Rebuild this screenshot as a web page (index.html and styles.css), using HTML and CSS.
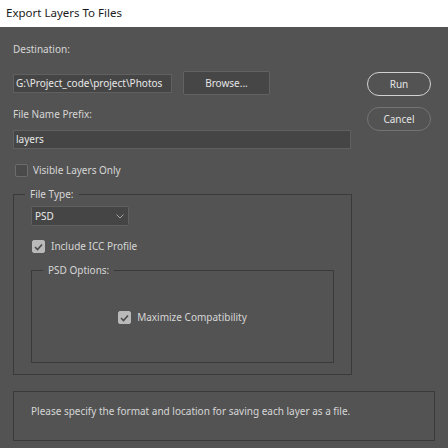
FILE: index.html
```html
<!DOCTYPE html>
<html>
<head>
<meta charset="utf-8">
<title>Export Layers To Files</title>
<link rel="stylesheet" href="styles.css">
</head>
<body>
<div class="titlebar">Export Layers To Files</div>
<div class="dialog">
  <div class="top">
    <div class="main">
      <div class="label">Destination:</div>
      <div class="dest-row">
        <div class="input path">G:\Project_code\project\Photos</div>
        <div class="browse">Browse...</div>
      </div>
      <div class="label prefix-label">File Name Prefix:</div>
      <div class="input prefix">layers</div>
      <div class="check-row visible"><span class="box"></span><span>Visible Layers Only</span></div>
      <div class="group filetype">
        <div class="legend">File Type:</div>
        <div class="select"><span>PSD</span><svg class="chev" width="8" height="5" viewBox="0 0 8 5"><polyline points="0.5,0.5 4,4 7.5,0.5" fill="none" stroke="#a3a3a3" stroke-width="1"/></svg></div>
        <div class="check-row icc"><span class="box checked"><svg width="9" height="8" viewBox="0 0 9 8"><polyline points="1,4 3.5,6.5 8,1.5" fill="none" stroke="#4a4a4a" stroke-width="1.6"/></svg></span><span>Include ICC Profile</span></div>
        <div class="group psd">
          <div class="legend">PSD Options:</div>
          <div class="check-row max"><span class="box checked"><svg width="9" height="8" viewBox="0 0 9 8"><polyline points="1,4 3.5,6.5 8,1.5" fill="none" stroke="#4a4a4a" stroke-width="1.6"/></svg></span><span>Maximize Compatibility</span></div>
        </div>
      </div>
    </div>
    <div class="actions">
      <div class="pill run">Run</div>
      <div class="pill cancel">Cancel</div>
    </div>
  </div>
  <div class="status">Please specify the format and location for saving each layer as a file.</div>
</div>
</body>
</html>
```
FILE: styles.css
```css
html, body {
  margin: 0;
  padding: 0;
}
body {
  width: 448px;
  height: 448px;
  overflow: hidden;
  background: #535353;
  font-family: "Noto Sans", "Open Sans", sans-serif;
  font-size: 10px;
  color: #d6d6d6;
}
.titlebar {
  box-sizing: border-box;
  height: 27px;
  background: #ffffff;
  color: #1b1b1b;
  font-size: 11.5px;
  line-height: 25px;
  padding-left: 6px;
}
.dialog {
  padding: 0 13px;
}
.top {
  display: flex;
  gap: 15px;
}
.main {
  width: 339px;
  padding-top: 15px;
}
.label {
  height: 14px;
  line-height: 14px;
}
.dest-row {
  display: flex;
  align-items: center;
  gap: 11px;
  height: 24px;
  margin-top: 15px;
}
.input {
  box-sizing: border-box;
  height: 19px;
  background: #454545;
  border: 1px solid #606060;
  color: #e8e8e8;
  padding-left: 2px;
  line-height: 17px;
  white-space: nowrap;
  overflow: hidden;
}
.path {
  width: 159px;
}
.browse {
  box-sizing: border-box;
  width: 87px;
  height: 24px;
  background: #464646;
  border: 1px solid #626262;
  border-radius: 2px;
  display: flex;
  align-items: center;
  justify-content: center;
  color: #e4e4e4;
}
.prefix-label {
  margin-top: 12px;
}
.prefix {
  width: 338px;
  margin-top: 9px;
}
.check-row {
  display: flex;
  align-items: center;
  gap: 5px;
  height: 13px;
  line-height: 13px;
}
.visible {
  margin-top: 15px;
  margin-left: 2px;
}
.box {
  box-sizing: border-box;
  width: 13px;
  height: 13px;
  border: 1px solid #6c6c6c;
  background: #4a4a4a;
  border-radius: 2px;
  flex: none;
}
.box.checked {
  background: #b9b9b9;
  border-color: #b9b9b9;
  display: flex;
  align-items: center;
  justify-content: center;
}
.group {
  border: 1px solid #3a3a3a;
}
.legend {
  width: fit-content;
  height: 14px;
  line-height: 14px;
  margin: -8px 0 0 -6px;
  padding: 0 5px;
  background: #535353;
}
.filetype {
  margin-top: 17px;
  padding: 0 17px 11px 17px;
}
.select {
  box-sizing: border-box;
  width: 98px;
  height: 20px;
  margin-top: 5px;
  background: #454545;
  border: 1px solid #606060;
  border-radius: 2px;
  display: flex;
  align-items: center;
  justify-content: space-between;
  padding: 0 4px 0 3px;
  color: #e8e8e8;
}
.icc {
  margin-top: 14px;
  margin-left: 1px;
  gap: 6px;
}
.psd {
  margin-top: 17px;
  padding: 0 17px 38px 17px;
}
.max {
  margin-top: 34px;
  justify-content: center;
  gap: 6px;
}
.actions {
  width: 64px;
  padding-top: 45px;
  display: flex;
  flex-direction: column;
  gap: 11px;
}
.pill {
  box-sizing: border-box;
  height: 24px;
  border-radius: 12px;
  border: 1px solid #747474;
  display: flex;
  align-items: center;
  justify-content: center;
  color: #e4e4e4;
}
.run {
  border-color: #d2d2d2;
}
.status {
  box-sizing: border-box;
  width: 422px;
  height: 50px;
  margin-top: 16px;
  border: 1px solid #3a3a3a;
  padding: 12px 17px 0;
  line-height: 14px;
}
```
